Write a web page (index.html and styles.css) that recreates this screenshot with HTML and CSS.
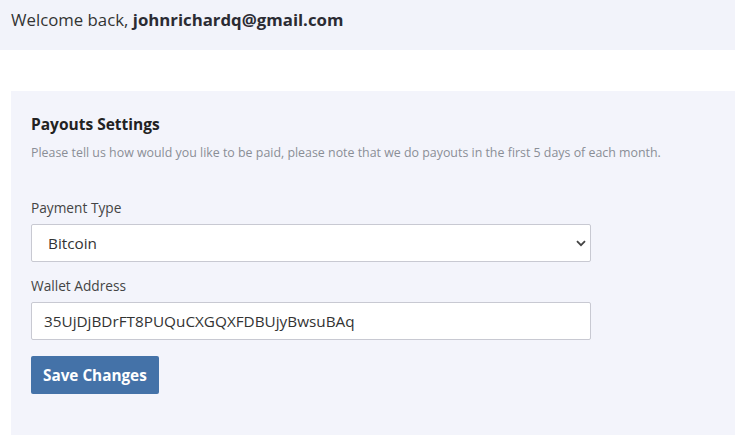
FILE: index.html
```html
<!DOCTYPE html>
<html>
<head>
<meta charset="utf-8">
<link rel="stylesheet" href="styles.css">
</head>
<body>
<header class="topbar">
  <p class="welcome">Welcome back, <strong>johnrichardq@gmail.com</strong></p>
</header>
<main class="content">
  <section class="panel">
    <h2 class="panel-title">Payouts Settings</h2>
    <p class="panel-desc">Please tell us how would you like to be paid, please note that we do payouts in the first 5 days of each month.</p>
    <form class="form">
      <div class="field">
        <label class="label" for="ptype">Payment Type</label>
        <div class="select-wrap">
          <select id="ptype" class="control select">
            <option>Bitcoin</option>
          </select>
          <svg class="chev" width="10" height="7" viewBox="0 0 10 7"><path d="M1 1.2 L5 5.2 L9 1.2" fill="none" stroke="#444" stroke-width="1.8"/></svg>
        </div>
      </div>
      <div class="field">
        <label class="label" for="wallet">Wallet Address</label>
        <input id="wallet" class="control" type="text" value="35UjDjBDrFT8PUQuCXGQXFDBUjyBwsuBAq">
      </div>
      <button type="button" class="btn">Save Changes</button>
    </form>
  </section>
</main>
</body>
</html>
```
FILE: styles.css
```css
* { box-sizing: border-box; }
html, body { margin: 0; padding: 0; background: #fff; }
body {
  font-family: "Open Sans", "Noto Sans", sans-serif;
  color: #333;
  width: 735px;
  height: 435px;
  overflow: hidden;
}
.topbar {
  background: #f2f3fa;
  height: 50px;
  padding: 8px 11px 0;
}
.welcome {
  margin: 0;
  font-size: 16.8px;
  color: #333;
}
.welcome strong { font-weight: 700; color: #2b2b33; }
.content {
  padding: 41px 0 0 11px;
}
.panel {
  background: #f3f4fb;
  padding: 22px 20px 0 20px;
  height: 344px;
}
.panel-title {
  margin: 0;
  font-size: 15.5px;
  font-weight: 700;
  color: #222;
}
.panel-desc {
  margin: 9px 0 0;
  font-size: 12.4px;
  color: #8a8e96;
}
.form {
  margin-top: 37px;
  display: flex;
  flex-direction: column;
  align-items: flex-start;
}
.field {
  display: flex;
  flex-direction: column;
  margin-bottom: 14px;
}
.label {
  font-size: 13.7px;
  color: #444;
  margin-bottom: 7px;
}
.select-wrap { position: relative; width: 560px; }
.control {
  width: 560px;
  height: 38px;
  border: 1px solid #c8c9d2;
  border-radius: 2px;
  background: #fff;
  font-family: inherit;
  font-size: 15.3px;
  color: #333;
  padding: 0 12px;
}
.select {
  -webkit-appearance: none;
  appearance: none;
  padding-left: 16px;
}
.chev {
  position: absolute;
  right: 5px;
  top: 16px;
  pointer-events: none;
}
.btn {
  margin-top: 2px;
  background: #4472a8;
  color: #fff;
  border: none;
  border-radius: 2px;
  height: 38px;
  padding: 0 12px;
  font-family: inherit;
  font-size: 15.3px;
  font-weight: 700;
}
```
